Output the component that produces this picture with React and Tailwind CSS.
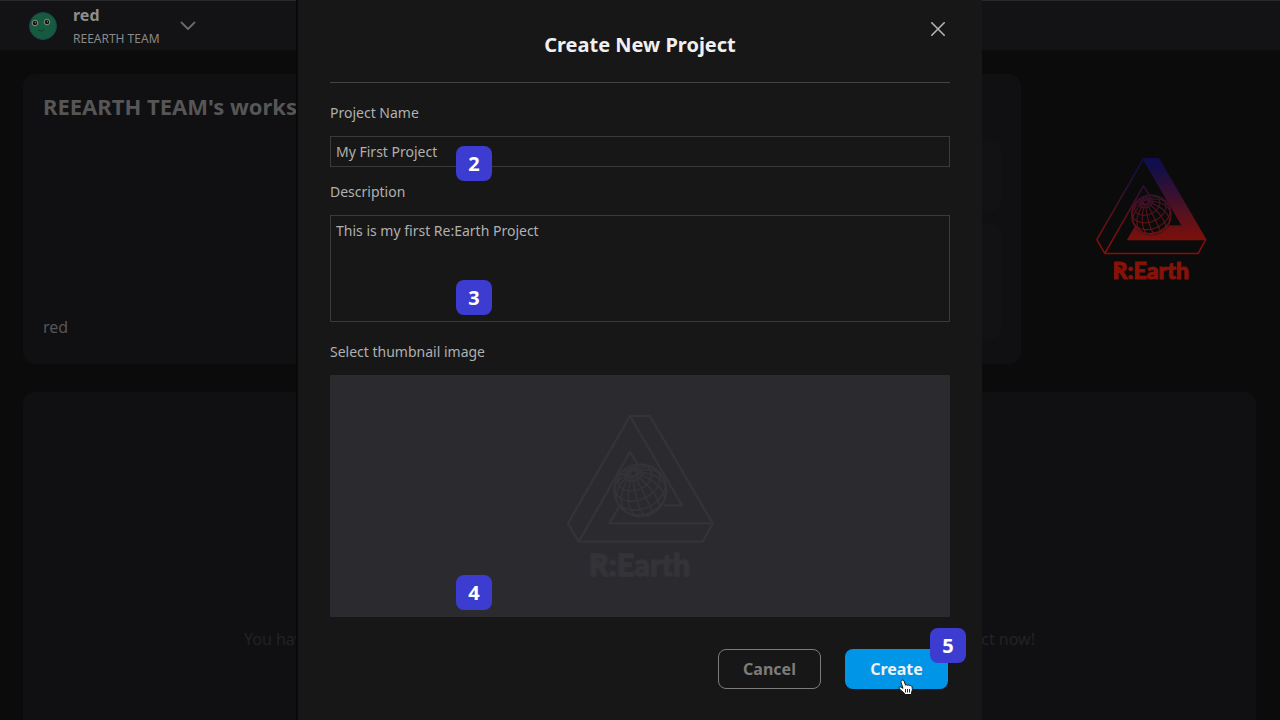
import React from "react";

const GLOBE = { cx: 271, cy: 271, r: 78 };

// Orthographic projection of a graticule whose pole leans toward the viewer.
function graticule(step) {
  const pole = [-0.28, 0.65, 0.706];
  const h = Math.hypot(pole[1], pole[2]);
  const u = [0, -pole[2] / h, pole[1] / h];
  const v = [
    pole[1] * u[2] - pole[2] * u[1],
    pole[2] * u[0] - pole[0] * u[2],
    pole[0] * u[1] - pole[1] * u[0],
  ];
  const rad = (deg) => (deg * Math.PI) / 180;
  const point = (colat, lon) => {
    const s = Math.sin(rad(colat));
    const c = Math.cos(rad(colat));
    return [0, 1, 2].map(
      (i) => c * pole[i] + s * (Math.cos(rad(lon)) * u[i] + Math.sin(rad(lon)) * v[i])
    );
  };
  const trace = (points) => {
    let d = "";
    let pen = false;
    points.forEach(([x, y, z]) => {
      if (z < 0) {
        pen = false;
        return;
      }
      const px = (GLOBE.cx + x * GLOBE.r).toFixed(1);
      const py = (GLOBE.cy - y * GLOBE.r).toFixed(1);
      d += `${pen ? "L" : "M"}${px} ${py}`;
      pen = true;
    });
    return d;
  };
  let d = "";
  for (let lon = 0; lon < 360; lon += step) {
    const pts = [];
    for (let c = 8; c <= 180; c += 4) pts.push(point(c, lon));
    d += trace(pts);
  }
  [8, 20, 42, 65, 90, 113].forEach((colat) => {
    const pts = [];
    for (let lon = 0; lon <= 360; lon += 5) pts.push(point(colat, lon));
    d += trace(pts);
  });
  return d;
}

const GRID = graticule(22.5);

function Logo({ className, line, text, filled, back, strokeWidth }) {
  return (
    <svg className={className} viewBox="36 33 468 510" role="img" aria-label="Re:Earth">
      <defs>
        <linearGradient id="brand" gradientUnits="userSpaceOnUse" x1="0" y1="48" x2="0" y2="400">
          <stop offset="0" stopColor="#0f0e50" />
          <stop offset="0.15" stopColor="#170f45" />
          <stop offset="0.6" stopColor="#54111f" />
          <stop offset="0.85" stopColor="#74100f" />
          <stop offset="1" stopColor="#841008" />
        </linearGradient>
      </defs>
      {filled && (
        <path d="M240 48H300L488 370H178L208 317H396Z" fill="url(#brand)" />
      )}
      {filled && <circle cx={GLOBE.cx} cy={GLOBE.cy} r="82" fill={back} />}
      <g fill="none" stroke={line} strokeWidth={strokeWidth} strokeLinejoin="round">
        <path d="M240 48H300L488 370L458 425H86L54 370Z" />
        <path d="M240 48L396 316H342" />
        <path d="M86 425L240 156L263 192" />
        <path d="M208 320L178 370H488" />
        <circle cx={GLOBE.cx} cy={GLOBE.cy} r={GLOBE.r} />
        <path d={GRID} strokeWidth={strokeWidth * 0.7} />
      </g>
      <text
        x="269"
        y="528"
        textAnchor="middle"
        fontSize="92"
        fontWeight="900"
        fill={text}
        stroke={text}
        strokeWidth="4"
        className="font-[Lato,sans-serif]"
      >
        R:Earth
      </text>
      <circle cx="144" cy="484" r="6" fill={text} />
    </svg>
  );
}

function Avatar() {
  return (
    <svg className="size-7 shrink-0" viewBox="0 0 28 28" aria-hidden="true">
      <circle cx="14" cy="14" r="13.5" fill="#165a3f" stroke="#1c4650" />
      <g fill="#121212" stroke="#8b8b8b" strokeWidth="1">
        <circle cx="6" cy="11" r="2.8" />
        <circle cx="18" cy="10" r="2.8" />
      </g>
      <circle cx="6.4" cy="10.6" r="0.8" fill="#777" />
      <circle cx="18.4" cy="9.6" r="0.8" fill="#777" />
      <path d="M9 18Q12.500 20.500 15.500 17.500" fill="none" stroke="#0c3a2a" strokeWidth="1" />
    </svg>
  );
}

function Badge({ className, children }) {
  return (
    <span
      className={`absolute z-10 flex h-[35px] w-9 items-center justify-center rounded-lg bg-[#3c3cd0] text-xl font-bold text-white ${className}`}
    >
      {children}
    </span>
  );
}

function Dashboard() {
  return (
    <div className="flex min-h-screen flex-col bg-[#0b0b0b]">
      <header className="flex h-[50px] items-center border-t border-[#29292b] bg-[#131315] pl-[29px]">
        <Avatar />
        <div className="ml-4 flex flex-col pt-0.5">
          <span className="text-base leading-6 font-bold text-[#8d8d8d]">red</span>
          <span className="text-xs leading-6 text-[#8a8a8a]">REEARTH TEAM</span>
        </div>
        <button type="button" aria-label="Switch workspace" className="ml-5">
          <svg className="h-2.5 w-4" viewBox="0 0 16 10" fill="none" stroke="#6a6a6a" strokeWidth="1.8" strokeLinecap="round" strokeLinejoin="round">
            <path d="M1.500 1.500L8 8L14.500 1.500" />
          </svg>
        </button>
      </header>

      <main className="flex flex-1 flex-col pt-6 pl-[23px]">
        <div className="flex h-[290px]">
          <section className="flex min-w-0 flex-1 rounded-xl bg-[#101012] px-5 pt-5 pb-[25px] text-[#565656]">
            <div className="flex min-w-0 flex-1 flex-col justify-between">
              <h1 className="text-[22px] leading-6 font-bold">REEARTH TEAM's workspace</h1>
              <p className="text-base leading-6">red</p>
            </div>
            <div className="mt-[47px] flex w-[300px] flex-col gap-[13px]">
              <div className="h-[70px] rounded-lg bg-[#121214]" />
              <div className="flex-1 rounded-lg bg-[#121214]" />
            </div>
          </section>
          <div className="flex w-[259px] items-center justify-center">
            <Logo className="h-32 w-[118px]" line="url(#brand)" text="#871208" filled back="#0b0b0b" strokeWidth={6} />
          </div>
        </div>

        <section className="mt-7 mr-6 flex-1 rounded-t-xl bg-[#101012] pt-[235px]">
          <p className="mx-auto flex w-[791px] justify-between text-base leading-6 text-[#222224]">
            <span>You have no projects yet.</span>
            <span>Create your first project now!</span>
          </p>
        </section>
      </main>
    </div>
  );
}

function Pointer() {
  return (
    <svg className="absolute top-[30px] left-[53px] h-[18px] w-[17px]" viewBox="0 0 17 18" aria-hidden="true">
      <path
        d="M3.500 1.500C4.500 0.700 5.700 1.100 6.100 2.200L7.600 6.200C8.200 5.500 9.300 5.700 9.700 6.400C10.400 5.800 11.500 6 11.900 6.800C12.900 6.300 14 6.900 14.100 8C14.300 9.800 14.600 11.400 13.600 13.200L13.400 15.500H7.200C6.300 13.600 4.200 12.700 2.800 11.200C1.400 9.900 0.500 8.800 1.200 8.100C2.200 7.300 3.700 8.300 5 9.400L3.100 3.500C2.900 2.700 3 2 3.500 1.500Z"
        fill="#fff"
        stroke="#111"
        strokeWidth="1"
        strokeLinejoin="round"
      />
      <path d="M7.500 10V13.500M9.500 10V13.500M11.500 10V13.500" stroke="#111" strokeWidth="0.9" />
    </svg>
  );
}

function CreateProjectDialog() {
  return (
    <div
      role="dialog"
      aria-modal="true"
      aria-labelledby="dialog-title"
      className="relative min-h-screen w-full max-w-[684px] bg-[#171717] px-8 shadow-[-2px_0_0_#0a0a0a]"
    >
      <header className="flex h-[83px] items-center justify-center border-b border-[#434343] pt-[7px]">
        <h2 id="dialog-title" className="text-xl leading-7 font-bold text-[#f0f0f0]">
          Create New Project
        </h2>
      </header>
      <button type="button" aria-label="Close" className="absolute top-[21px] right-9 p-px">
        <svg className="size-3.5" viewBox="0 0 14 14" fill="none" stroke="#b4b4b4" strokeWidth="1.6" strokeLinecap="round">
          <path d="M0.800 0.800L13.200 13.200M13.200 0.800L0.800 13.200" />
        </svg>
      </button>

      <form className="flex flex-col pt-5 text-sm leading-5 text-[#b0b0b0]" onSubmit={(e) => e.preventDefault()}>
        <div className="relative flex flex-col gap-[13px]">
          <label htmlFor="name">Project Name</label>
          <input
            id="name"
            type="text"
            defaultValue="My First Project"
            className="h-[31px] w-full border border-[#3a3a3c] bg-transparent px-[5px] outline-none"
          />
          <Badge className="top-[43px] left-[126px]">2</Badge>
        </div>
        <div className="relative mt-[15px] flex flex-col gap-[13px]">
          <label htmlFor="description">Description</label>
          <textarea
            id="description"
            defaultValue="This is my first Re:Earth Project"
            className="h-[107px] w-full resize-none border border-[#3a3a3c] bg-transparent px-[5px] py-[5px] outline-none"
          />
          <Badge className="top-[98px] left-[126px]">3</Badge>
        </div>
        <div className="relative mt-5 flex flex-col gap-[13px]">
          <span id="thumbnail-label">Select thumbnail image</span>
          <button
            type="button"
            aria-labelledby="thumbnail-label"
            className="flex h-[242px] w-full items-center justify-center bg-[#2b2a2f]"
          >
            <Logo className="h-[170px] w-[156px]" line="#343338" text="#343338" strokeWidth={7} />
          </button>
          <Badge className="top-[233px] left-[126px]">4</Badge>
        </div>
        <footer className="mt-8 flex justify-end gap-6 pr-0.5 pb-8 text-base font-bold">
          <button type="button" className="h-10 w-[103px] rounded-lg border border-[#7c7c7c] text-[#7c7c7c]">
            Cancel
          </button>
          <div className="relative">
            <button type="submit" className="h-10 w-[103px] rounded-lg bg-[#0095e6] text-[#f0f0f0]">
              Create
            </button>
            <Badge className="-top-[21px] left-[85px]">5</Badge>
            <Pointer />
          </div>
        </footer>
      </form>
    </div>
  );
}

export default function App() {
  return (
    <div className="relative overflow-hidden font-['Noto_Sans',sans-serif]">
      <Dashboard />
      <div className="absolute inset-0 flex justify-center">
        <CreateProjectDialog />
      </div>
    </div>
  );
}
